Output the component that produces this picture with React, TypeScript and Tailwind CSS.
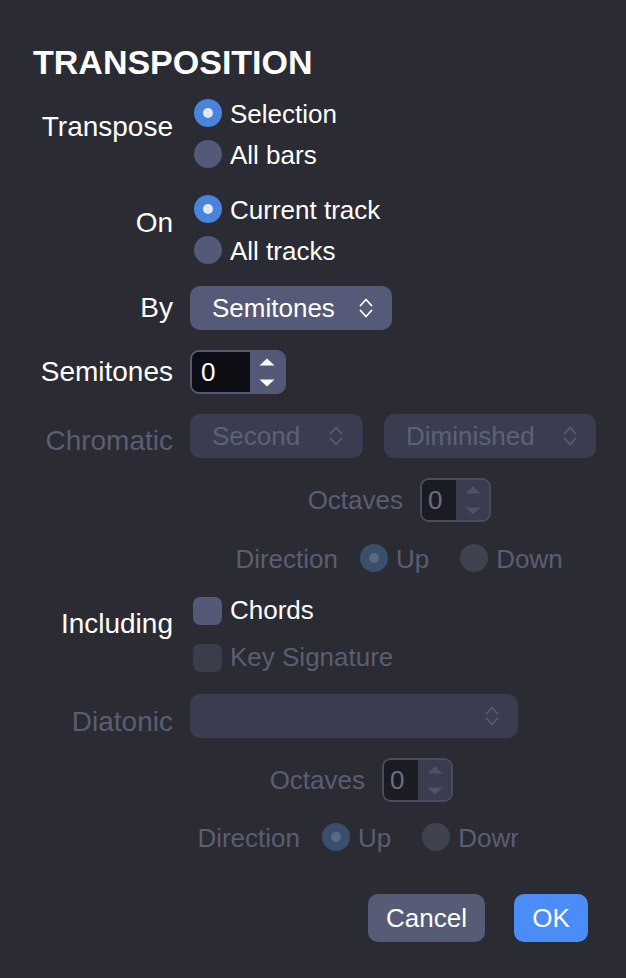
import React from "react"

const labelBase = "w-[173px] shrink-0 text-right text-[28px]"

function Chevrons({ color }: { color: string }) {
    return (
        <svg width="16" height="24" viewBox="0 0 16 24" fill="none" stroke={color} strokeWidth="1.8" strokeLinecap="round" strokeLinejoin="round">
            <path d="M2.5 9.5 L8 3.5 L13.5 9.5" />
            <path d="M2.5 14.5 L8 20.5 L13.5 14.5" />
        </svg>
    )
}

function Triangle({ up, color }: { up?: boolean; color: string }) {
    return (
        <svg width="16" height="8" viewBox="0 0 16 8" fill={color}>
            {up ? <path d="M8 0.5 L15.5 7.5 L0.5 7.5 Z" /> : <path d="M0.5 0.5 L15.5 0.5 L8 7.5 Z" />}
        </svg>
    )
}

function Radio({ checked, disabled }: { checked?: boolean; disabled?: boolean }) {
    const outer = disabled
        ? checked ? "bg-[#3a4f6c]" : "bg-[#40424f]"
        : checked ? "bg-[#4a83dc]" : "bg-[#535977]"
    const dot = disabled ? "bg-[#586a84]" : "bg-[#e3e7ef]"
    return (
        <span className={`w-[28px] h-[28px] shrink-0 rounded-full flex items-center justify-center mb-[3px] ${outer}`}>
            {checked && <span className={`w-[10px] h-[10px] rounded-full ${dot}`} />}
        </span>
    )
}

function RadioItem({ text, checked }: { text: string; checked?: boolean }) {
    return (
        <div className="h-[41px] flex items-center gap-[8px] pl-[4px]">
            <Radio checked={checked} />
            <span className="leading-[41px]">{text}</span>
        </div>
    )
}

function Select({ text, width, disabled, pr }: { text: string; width: string; disabled?: boolean; pr: string }) {
    return (
        <div
            className={`${width} ${pr} h-[44px] shrink-0 rounded-[10px] flex items-center justify-between pl-[22px] ${
                disabled ? "bg-[#3a3d50] text-[#5d6177]" : "bg-[#545a78] text-white"
            }`}
        >
            <span>{text}</span>
            <Chevrons color={disabled ? "#585c73" : "#ffffff"} />
        </div>
    )
}

function NumberInput({ disabled, small }: { disabled?: boolean; small?: boolean }) {
    return (
        <div
            className={`${small ? "w-[71px]" : "w-[96px]"} h-[44px] shrink-0 rounded-[9px] border-2 overflow-hidden flex ${
                disabled ? "border-[#4a4d62]" : "border-[#535977]"
            }`}
        >
            <div
                className={`${small ? "w-[34px] pl-[6px]" : "w-[58px] pl-[9px]"} h-full flex items-center ${
                    disabled ? "bg-[#1b1c23] text-[#6b6f83]" : "bg-[#0d0e13] text-white"
                }`}
            >
                0
            </div>
            <div
                className={`flex-1 flex flex-col items-center justify-center gap-[13px] ${
                    disabled ? "bg-[#3a3d50]" : "bg-[#535977]"
                }`}
            >
                <Triangle up color={disabled ? "#4f5368" : "#ffffff"} />
                <Triangle color={disabled ? "#4f5368" : "#ffffff"} />
            </div>
        </div>
    )
}

function DisabledRadio({ checked }: { checked?: boolean }) {
    return <Radio checked={checked} disabled />
}

function DirectionRow({ labelWidth }: { labelWidth: string }) {
    return (
        <div className="h-[44px] flex items-center text-[#5a5e73] overflow-hidden whitespace-nowrap">
            <span className={`${labelWidth} shrink-0 text-right`}>Direction</span>
            <div className="flex items-center gap-[8px] ml-[22px]">
                <DisabledRadio checked />
                <span>Up</span>
            </div>
            <div className="flex items-center gap-[8px] ml-[31px]">
                <DisabledRadio />
                <span>Down</span>
            </div>
        </div>
    )
}

export default function App() {
    return (
        <main className="w-[626px] h-[978px] bg-[#2a2b33] text-white text-[26px] font-['Liberation_Sans',Arial,sans-serif] overflow-hidden">
            {/* Title */}
            <h1 className="pl-[33px] pt-[44px] text-[34px] leading-[36px] font-bold">TRANSPOSITION</h1>

            {/* Transpose */}
            <div className="flex gap-[17px] mt-[14px]">
                <span className={`${labelBase} pt-[12px] leading-[41px]`}>Transpose</span>
                <div className="flex flex-col">
                    <RadioItem text="Selection" checked />
                    <RadioItem text="All bars" />
                </div>
            </div>

            {/* On */}
            <div className="flex gap-[17px] mt-[14px]">
                <span className={`${labelBase} pt-[12px] leading-[41px]`}>On</span>
                <div className="flex flex-col">
                    <RadioItem text="Current track" checked />
                    <RadioItem text="All tracks" />
                </div>
            </div>

            {/* By */}
            <div className="flex items-center gap-[17px] mt-[14px]">
                <span className={`${labelBase} leading-[44px]`}>By</span>
                <Select text="Semitones" width="w-[202px]" pr="pr-[18px]" />
            </div>

            {/* Semitones */}
            <div className="flex items-center gap-[17px] mt-[20px]">
                <span className={`${labelBase} leading-[44px]`}>Semitones</span>
                <NumberInput />
            </div>

            {/* Chromatic */}
            <div className="flex items-start gap-[17px] mt-[20px]">
                <span className={`${labelBase} h-[44px] pt-[5px] leading-[44px] text-[#5a5e73]`}>Chromatic</span>
                <div className="flex gap-[21px]">
                    <Select text="Second" width="w-[173px]" pr="pr-[19px]" disabled />
                    <Select text="Diminished" width="w-[212px]" pr="pr-[18px]" disabled />
                </div>
            </div>

            {/* Octaves / Direction (chromatic) */}
            <div className="pl-[190px]">
                <div className="flex items-center gap-[17px] mt-[20px]">
                    <span className="w-[213px] shrink-0 text-right text-[#5a5e73]">Octaves</span>
                    <NumberInput disabled small />
                </div>
                <div className="mt-[15px] w-[406px]">
                    <DirectionRow labelWidth="w-[148px]" />
                </div>
            </div>

            {/* Including */}
            <div className="flex gap-[17px] mt-[6px]">
                <span className={`${labelBase} pt-[13px] leading-[47px]`}>Including</span>
                <div className="flex flex-col">
                    <div className="h-[47px] flex items-center gap-[8px] pl-[3px]">
                        <span className="w-[29px] h-[28px] rounded-[7px] bg-[#535977]" />
                        <span>Chords</span>
                    </div>
                    <div className="h-[47px] flex items-center gap-[8px] pl-[3px] text-[#5a5e73]">
                        <span className="w-[29px] h-[28px] rounded-[7px] bg-[#3b3d4c]" />
                        <span>Key Signature</span>
                    </div>
                </div>
            </div>

            {/* Diatonic */}
            <div className="flex items-start gap-[17px] mt-[13px]">
                <span className={`${labelBase} h-[44px] pt-[6px] leading-[44px] text-[#5a5e73]`}>Diatonic</span>
                <Select text="" width="w-[328px]" pr="pr-[18px]" disabled />
            </div>

            {/* Octaves / Direction (diatonic) */}
            <div className="pl-[190px]">
                <div className="flex items-center gap-[17px] mt-[20px]">
                    <span className="w-[175px] shrink-0 text-right text-[#5a5e73]">Octaves</span>
                    <NumberInput disabled small />
                </div>
                <div className="mt-[14px] w-[328px]">
                    <DirectionRow labelWidth="w-[110px]" />
                </div>
            </div>

            {/* Action Buttons */}
            <div className="flex justify-end gap-[29px] pr-[38px] mt-[34px]">
                <button className="w-[117px] h-[48px] rounded-[10px] bg-[#565b76] text-white">Cancel</button>
                <button className="w-[74px] h-[48px] rounded-[10px] bg-[#4b8cf7] text-white">OK</button>
            </div>
        </main>
    )
}
